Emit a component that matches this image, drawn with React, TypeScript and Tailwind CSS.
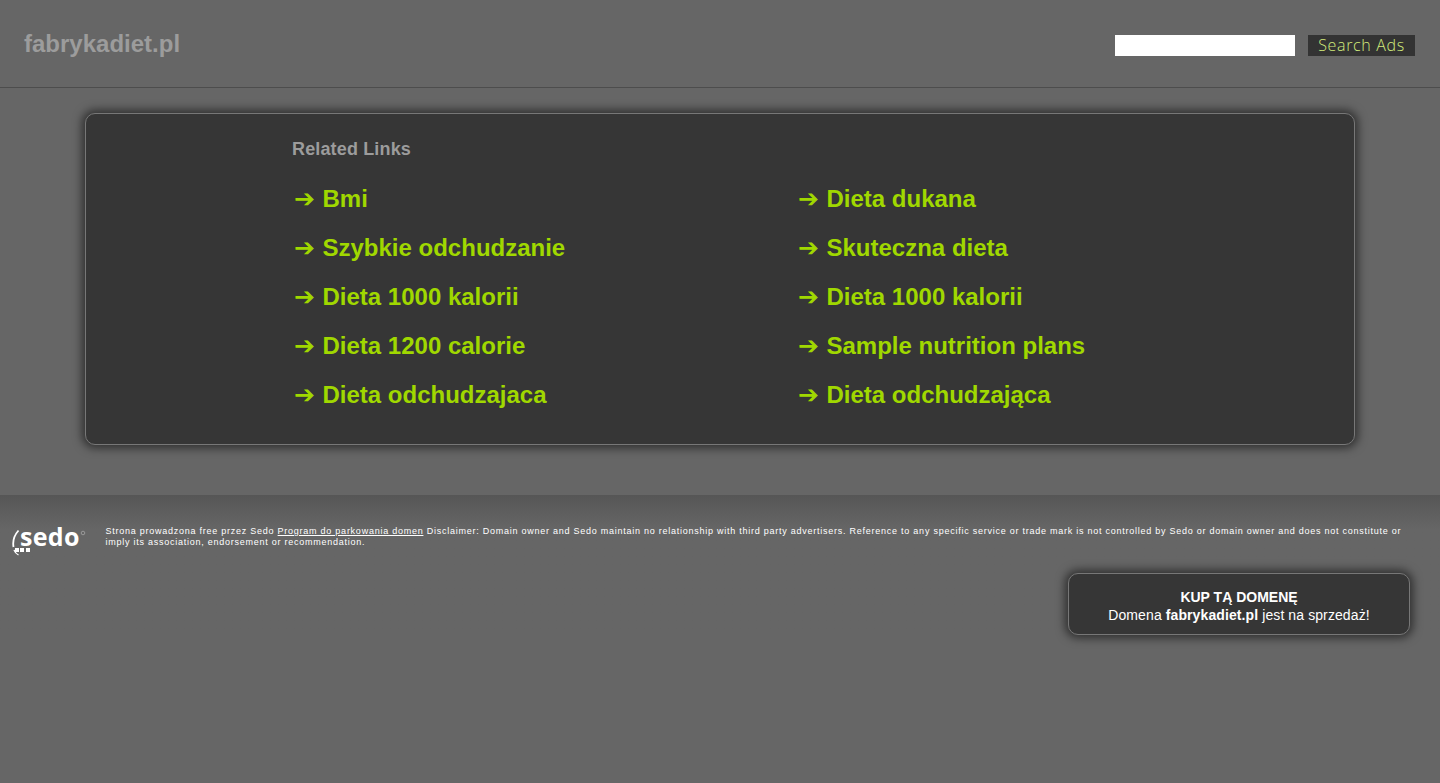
const leftLinks = ["Bmi", "Szybkie odchudzanie", "Dieta 1000 kalorii", "Dieta 1200 calorie", "Dieta odchudzajaca"];
const rightLinks = ["Dieta dukana", "Skuteczna dieta", "Dieta 1000 kalorii", "Sample nutrition plans", "Dieta odchudzająca"];

function LinkRow({ label }: { label: string }) {
  return (
    <a href="#" className="flex h-[49px] items-center pl-[2px] text-[24px] font-bold leading-[47px] text-[#a0d800]">
      <span className="w-[28.5px] font-['DejaVu_Sans'] text-[25px]">➔</span>
      <span>{label}</span>
    </a>
  );
}

function SedoLogo() {
  return (
    <div className="relative h-[34px] w-[76px] shrink-0 text-white">
      <svg className="absolute left-0 top-0" width="76" height="34" viewBox="0 0 76 34">
        <path d="M6.5 4.5 C2.5 9 0.5 15 1.5 21" fill="none" stroke="#fff" strokeWidth="1.8" />
        <path d="M2 24 C3 26.5 4.5 28 6.5 29" fill="none" stroke="#fff" strokeWidth="1.3" />
        <rect x="3" y="22" width="4" height="4" fill="#fff" />
        <rect x="8" y="22" width="4" height="4" fill="#fff" />
        <rect x="14" y="22" width="4" height="4" fill="#fff" />
        <circle cx="71" cy="7" r="1.8" fill="none" stroke="#999" strokeWidth="1" />
      </svg>
      <span className="absolute left-[8px] top-[-7px] font-['Open_Sans'] text-[25px] font-bold leading-[34px] tracking-[0.3px]">sedo</span>
    </div>
  );
}

export default function App() {
  return (
    <div className="min-h-[783px] bg-[#666666] font-['Liberation_Sans',Arial,sans-serif]">
      <header className="flex h-[88px] items-center justify-between border-b border-[#4d4d4d] pl-[24px] pr-[25px]">
        <div className="text-[24px] font-bold text-[#9c9c9c]">fabrykadiet.pl</div>
        <div className="mt-[3px] flex items-center gap-[13px]">
          <input className="h-[21px] w-[180px] bg-white" />
          <button className="h-[21px] w-[107px] bg-[#333333] font-['Open_Sans'] text-[16px] font-light leading-[21px] tracking-[0.65px] text-[#d2ec7c]">
            Search Ads
          </button>
        </div>
      </header>

      <main className="relative h-[407px] px-[85px] pt-[25px]">
        <section className="h-[332px] rounded-[10px] border border-[#777777] bg-[#363636] pl-[206px] pt-[23px] shadow-[0_0_10px_3px_rgba(0,0,0,0.55)]">
          <h2 className="text-[18px] font-bold leading-[24px] tracking-[0.15px] text-[#9c9c9c]">Related Links</h2>
          <div className="mt-[13px] flex">
            <div className="w-[504px]">
              {leftLinks.map((l) => (
                <LinkRow key={l} label={l} />
              ))}
            </div>
            <div>
              {rightLinks.map((l) => (
                <LinkRow key={l} label={l} />
              ))}
            </div>
          </div>
        </section>
      </main>

      <footer className="flex flex-col bg-gradient-to-b from-[#565656] to-[#666666] to-[34px]">
        <div className="flex pl-[12px] pr-[30px] pt-[31px]">
          <SedoLogo />
          <p className="ml-[17.5px] text-[9px] leading-[11px] tracking-[0.75px] text-white">
            Strona prowadzona free przez Sedo <a href="#" className="underline">Program do parkowania domen</a> Disclaimer: Domain owner and Sedo maintain no relationship with third party advertisers. Reference to any specific service or trade mark is not controlled by Sedo or domain owner and does not constitute or imply its association, endorsement or recommendation.
          </p>
        </div>
        <div className="mr-[30px] mt-[13px] flex h-[62px] w-[342px] flex-col items-center justify-center self-end rounded-[10px] border border-[#777777] bg-[#363636] pt-[4px] text-[14px] leading-[18px] text-white shadow-[0_0_10px_3px_rgba(0,0,0,0.55)]">
          <div className="font-bold">KUP TĄ DOMENĘ</div>
          <div className="tracking-[0.1px]">Domena <b>fabrykadiet.pl</b> jest na sprzedaż!</div>
        </div>
      </footer>
    </div>
  );
}
